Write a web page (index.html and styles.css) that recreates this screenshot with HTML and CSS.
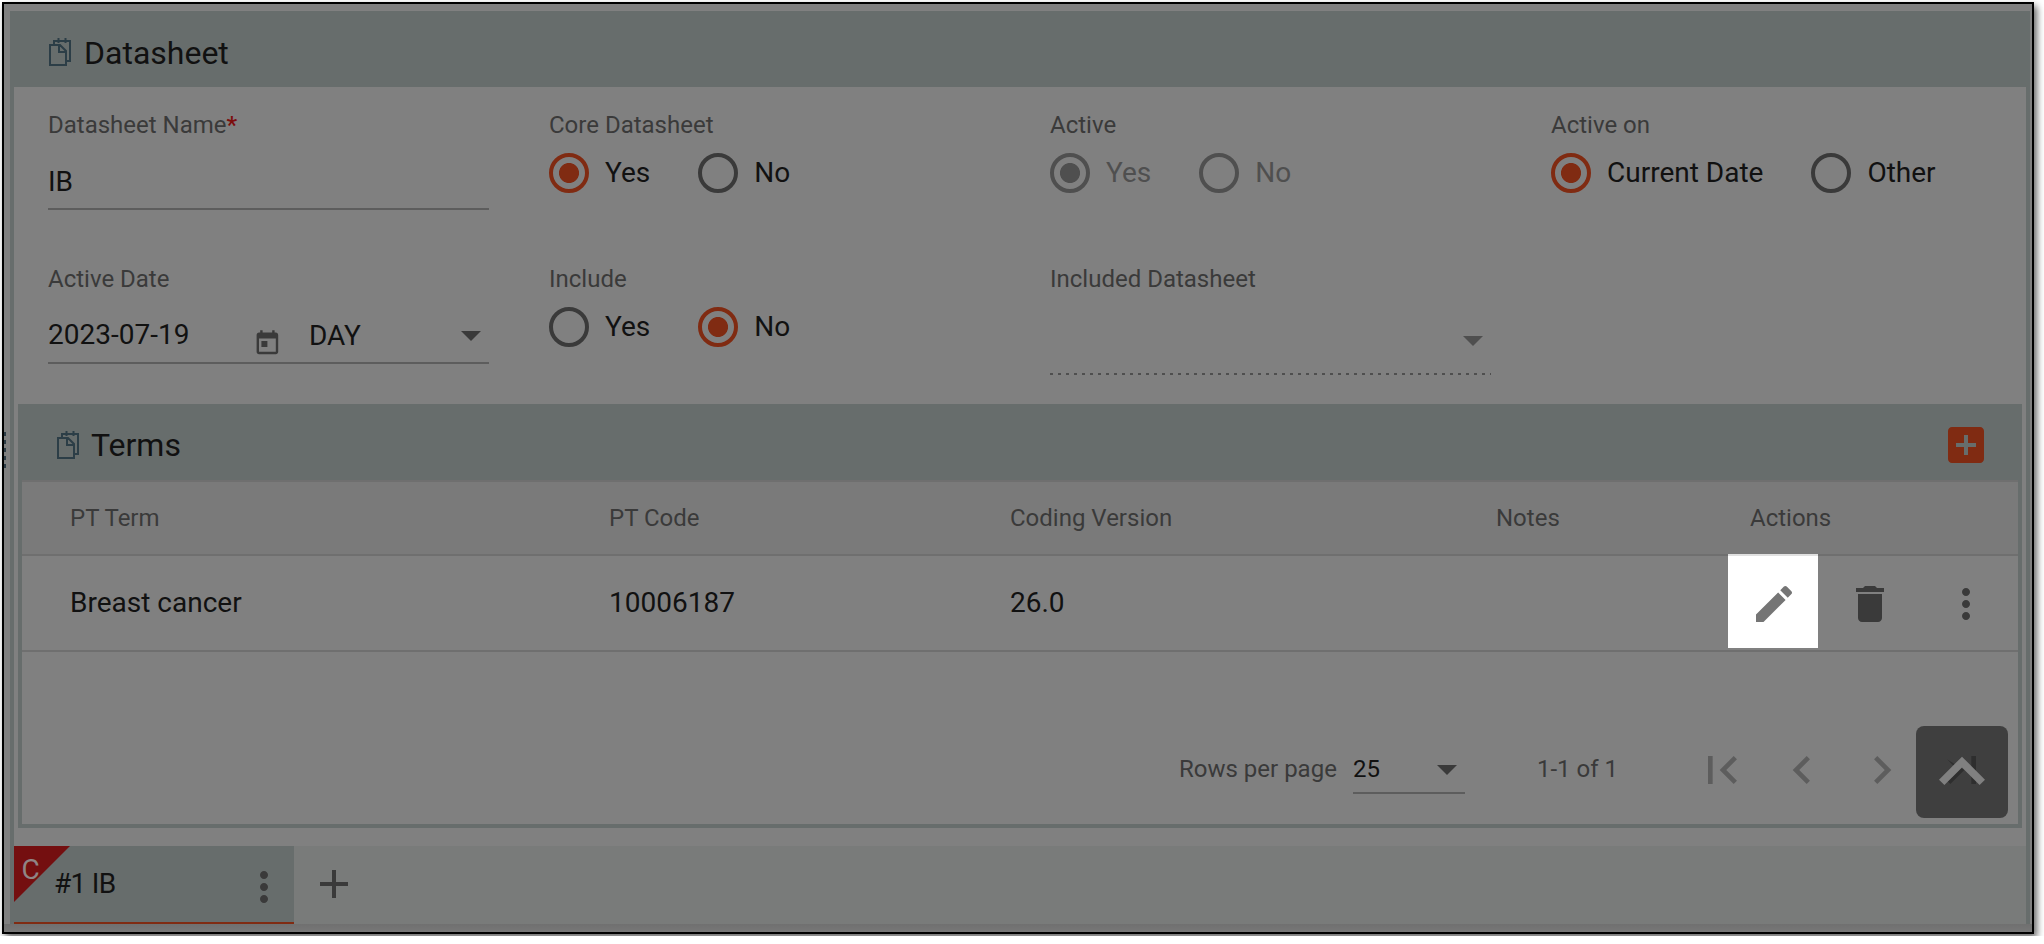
FILE: index.html
```
<!DOCTYPE html>
<html lang="en">
<head>
<meta charset="utf-8">
<title>Datasheet</title>
<link rel="stylesheet" href="styles.css">
</head>
<body>
<svg class="defs" width="0" height="0">
  <symbol id="doc" viewBox="0 0 22 28"><path d="M5 7V3h16v20h-3M9.5 0v5M16.500 0v5M1 7h10l6 6v14H1zM10 7v7h7" fill="none" stroke="currentColor" stroke-width="2"/></symbol>
  <symbol id="more" viewBox="0 0 24 24"><path d="M12 8c1.1 0 2-.9 2-2s-.9-2-2-2-2 .9-2 2 .9 2 2 2zm0 2c-1.1 0-2 .9-2 2s.9 2 2 2 2-.9 2-2-.9-2-2-2zm0 6c-1.1 0-2 .9-2 2s.9 2 2 2 2-.9 2-2-.9-2-2-2z"/></symbol>
  <symbol id="drop" viewBox="0 0 24 24"><path d="M7 10l5 5 5-5z"/></symbol>
</svg>
<div class="frame">
  <div class="grip"></div>
  <main class="panel">
    <header class="bar"><svg class="doc"><use href="#doc"/></svg><h1>Datasheet</h1></header>
    <section class="fields">
      <div class="field"><label>Datasheet Name<b>*</b></label><div class="input">IB</div></div>
      <div class="field"><label>Core Datasheet</label><div class="radios"><span class="radio on"><i></i>Yes</span><span class="radio"><i></i>No</span></div></div>
      <div class="field"><label>Active</label><div class="radios disabled"><span class="radio on"><i></i>Yes</span><span class="radio"><i></i>No</span></div></div>
      <div class="field"><label>Active on</label><div class="radios"><span class="radio on"><i></i>Current Date</span><span class="radio"><i></i>Other</span></div></div>
      <div class="field"><label>Active Date</label><div class="input date"><span class="day">2023-07-19</span><svg class="cal" viewBox="0 0 24 24"><path d="M19 3h-1V1h-2v2H8V1H6v2H5c-1.11 0-1.99.9-1.99 2L3 19c0 1.1.89 2 2 2h14c1.1 0 2-.9 2-2V5c0-1.1-.9-2-2-2zm0 16H5V8h14v11zM7 10h5v5H7z"/></svg><span class="unit">DAY</span><svg class="icon"><use href="#drop"/></svg></div></div>
      <div class="field"><label>Include</label><div class="radios"><span class="radio"><i></i>Yes</span><span class="radio on"><i></i>No</span></div></div>
      <div class="field"><label>Included Datasheet</label><div class="select-off"><svg class="icon"><use href="#drop"/></svg></div></div>
    </section>
    <section class="terms">
      <header class="bar"><svg class="doc"><use href="#doc"/></svg><h2>Terms</h2><svg class="icon add" viewBox="0 0 24 24"><path d="M19 3H5c-1.11 0-2 .9-2 2v14c0 1.1.89 2 2 2h14c1.1 0 2-.9 2-2V5c0-1.1-.9-2-2-2zm-2 10h-4v4h-2v-4H7v-2h4V7h2v4h4v2z"/></svg></header>
      <div class="row head"><span>PT Term</span><span>PT Code</span><span>Coding Version</span><span>Notes</span><span class="act">Actions</span></div>
      <div class="row data"><span>Breast cancer</span><span>10006187</span><span>26.0</span><span></span>
        <div class="actions">
          <div class="edit"><svg class="icon" viewBox="0 0 24 24"><path d="M3 17.25V21h3.75L17.81 9.94l-3.75-3.75L3 17.25zM20.71 7.04c.39-.39.39-1.02 0-1.41l-2.34-2.34c-.39-.39-1.02-.39-1.41 0l-1.83 1.83 3.75 3.75 1.83-1.83z"/></svg></div>
          <svg class="icon trash" viewBox="0 0 24 24"><path d="M6 19c0 1.1.9 2 2 2h8c1.1 0 2-.9 2-2V7H6v12zM19 4h-3.5l-1-1h-5l-1 1H5v2h14V4z"/></svg>
          <svg class="icon dots"><use href="#more"/></svg>
        </div>
      </div>
      <div class="pager">
        <span class="rpp">Rows per page</span>
        <div class="size"><span>25</span><svg class="icon"><use href="#drop"/></svg></div>
        <span class="range">1-1 of 1</span>
        <div class="nav">
          <svg viewBox="0 0 24 24"><path d="M18.41 16.59L13.82 12l4.59-4.59L17 6l-6 6 6 6zM6 6h2v12H6z"/></svg>
          <svg viewBox="0 0 24 24"><path d="M15.41 7.41L14 6l-6 6 6 6 1.41-1.41L10.83 12z"/></svg>
          <svg viewBox="0 0 24 24"><path d="M10 6L8.59 7.41 13.17 12l-4.58 4.59L10 18l6-6z"/></svg>
          <svg viewBox="0 0 24 24"><path d="M5.59 7.41L10.18 12l-4.59 4.59L7 18l6-6zM16 6h2v12h-2z"/></svg>
        </div>
      </div>
    </section>
    <footer class="tabs">
      <div class="tab"><span class="corner"></span><span class="corner-text">C</span><span class="name">#1 IB</span><svg class="icon"><use href="#more"/></svg></div>
      <svg class="icon plus" viewBox="0 0 24 24"><path d="M19 13h-6v6h-2v-6H5v-2h6V5h2v6h6v2z"/></svg>
    </footer>
  </main>
  <div class="to-top"><svg viewBox="0 0 24 24"><path d="M12 8l-6 6 1.41 1.41L12 10.83l4.59 4.58L18 14z"/></svg></div>
</div>
</body>
</html>
```
FILE: styles.css
```
* { box-sizing: border-box; }
body {
  margin: 0;
  padding: 2px;
  background: #fff;
  font-family: Roboto, sans-serif;
  font-size: 28px;
  color: #111;
  overflow: hidden;
}
svg { display: block; fill: #3a3a3a; flex: none; }
.defs { position: absolute; }
.icon { width: 48px; height: 48px; }
.frame {
  position: relative;
  width: 2032px;
  height: 932px;
  border: 2px solid #000;
  padding: 7px 2px 0 6px;
  background: linear-gradient(#808080 0 920px, #707070 920px, #777 928px);
  box-shadow: 3px 4px 7px rgba(0, 0, 0, .6);
}
.grip {
  position: absolute;
  left: 0;
  top: 428px;
  width: 2px;
  height: 36px;
  background: repeating-linear-gradient(#2b3a44 0 4px, transparent 4px 8px);
}
.panel {
  display: flex;
  flex-direction: column;
  height: 913px;
  border: solid #676d6c;
  border-width: 0 4px;
  background: #808080;
}
.bar {
  display: flex;
  align-items: center;
  height: 76px;
  flex: none;
  padding-left: 39px;
  margin: 0 -4px;
  background: #676d6c;
}
.doc { width: 22px; height: 28px; margin-top: 6px; color: #2c3e47; }
h1, h2 { margin: 7px 0 0 13px; font-size: 32px; line-height: 40px; font-weight: 400; }
h2 { margin: 6px 0 0 12px; }
.fields {
  display: grid;
  grid-template-columns: repeat(4, 441px);
  grid-template-rows: 154px 154px;
  column-gap: 60px;
  height: 317px;
  padding: 22px 0 0 34px;
}
label { display: block; height: 32px; font-size: 24px; line-height: 32px; color: #3a3a3a; white-space: nowrap; }
label b { color: #7c0d0d; font-weight: 500; }
.input { height: 69px; padding-top: 23px; line-height: 36px; border-bottom: 2px solid #5d5d5d; }
.date { display: flex; padding-top: 22px; }
.day { flex: none; width: 205px; }
.cal { width: 28.8px; height: 28.8px; margin: 12px 0 0 .4px; }
.unit { flex: none; width: 138px; margin-left: 26.8px; padding-top: 1px; }
.date .icon { margin-top: -6px; }
.radios { display: flex; gap: 48px; padding-top: 12px; }
.radio { display: flex; gap: 16px; line-height: 40px; height: 40px; white-space: nowrap; }
.radio i { width: 40px; height: 40px; border: 4px solid #3a3a3a; border-radius: 50%; }
.radio.on i { border-color: #802b12; background: radial-gradient(circle, #802b12 9.6px, transparent 10.4px); }
.radios.disabled { color: #4f4f4f; }
.radios.disabled i { border-color: #4f4f4f; }
.radios.disabled .on i { background: radial-gradient(circle, #4f4f4f 9.6px, transparent 10.4px); }
.select-off {
  display: flex;
  justify-content: flex-end;
  height: 80px;
  background: repeating-linear-gradient(90deg, #4f4f4f 0 3px, transparent 3px 8px) bottom / 100% 2px no-repeat;
}
.select-off .icon { margin: 21px -6px 0 0; fill: #4f4f4f; }
.terms {
  height: 424px;
  margin: 0 4px;
  border: 4px solid #676d6c;
  border-top: 0;
}
.add { margin: 6px 32px 0 auto; fill: #802b12; }
.row {
  display: grid;
  grid-template-columns: 539px 401px 486px 232px 290px;
  align-items: center;
  padding-left: 48px;
  border-bottom: 2px solid #6f6f6f;
  white-space: nowrap;
}
.head { height: 76px; border-top: 2px solid #6f6f6f; background: #7a7a7a; font-size: 24px; color: #3a3a3a; }
.head .act { padding-left: 22px; }
.data { height: 96px; }
.data > span { margin-top: -1px; }
.actions { display: flex; align-items: center; height: 94px; }
.edit {
  width: 90px;
  height: 94px;
  margin-top: -4px;
  padding: 24px 22px;
  border-top: 2px solid #e0e0e0;
  background: #fff;
}
.edit .icon { fill: #757575; }
.trash { margin: 2px 48px 0 28px; }
.dots { margin-top: 2px; }
.pager { display: flex; height: 172px; padding: 90px 0 0 1157px; font-size: 24px; line-height: 54px; color: #3a3a3a; white-space: nowrap; }
.rpp { width: 174px; }
.size { display: flex; justify-content: space-between; width: 112px; height: 52px; color: #111; border-bottom: 2px solid #5d5d5d; }
.size .icon { margin: 3px -6px 0 0; }
.range { width: 157px; margin-left: 72px; }
.nav { display: flex; gap: 24px; }
.nav svg { width: 56px; height: 56px; fill: #5d5d5d; }
.tabs { display: flex; height: 78px; margin-top: 18px; background: #797b7a; }
.tab { position: relative; display: flex; width: 280px; padding-left: 40px; background: #676d6c; border-bottom: 2px solid #802b12; }
.corner { position: absolute; left: 0; top: 0; width: 56px; height: 56px; background: #740f10; clip-path: polygon(0 0, 100% 0, 0 100%); }
.corner-text { position: absolute; left: 7.5px; top: 6px; line-height: 36px; font-size: 28px; color: #8f8585; }
.name { width: 186px; padding-top: 19px; line-height: 38px; letter-spacing: -.7px; }
.tab .icon { margin-top: 17px; }
.plus { margin: 14px 0 0 16px; }
.to-top { position: absolute; left: 1912px; top: 722px; width: 92px; height: 92px; border-radius: 8px; background: rgba(0, 0, 0, .505); }
.to-top svg { fill: #808080; }
```
